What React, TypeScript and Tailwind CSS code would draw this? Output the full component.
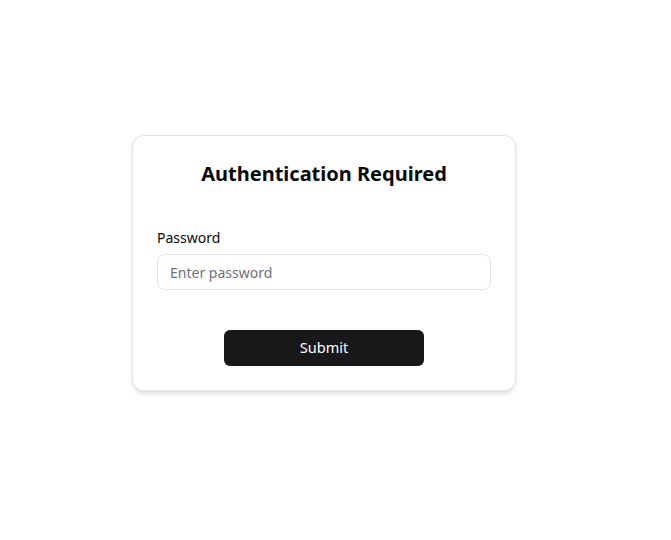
export default function App() {
    return (
        <div
            className="min-h-screen bg-white pl-[132px] pt-[135px] text-black"
            style={{ fontFamily: '"Noto Sans", "Open Sans", sans-serif' }}
        >
            <div className="w-96 rounded-xl border border-[#e4e4e7] bg-white p-6 shadow-md">
                <h1 className="text-center text-xl font-bold leading-7 text-[#09090b]">
                    Authentication Required
                </h1>

                <form className="mt-10" onSubmit={(e) => e.preventDefault()}>
                    <label htmlFor="password" className="block text-sm leading-5 text-[#09090b]">
                        Password
                    </label>
                    <input
                        id="password"
                        type="password"
                        placeholder="Enter password"
                        className="mt-1.5 block h-9 w-full rounded-lg border border-[#e4e4e7] px-3 text-[14px] placeholder-[#71717a] focus:outline-none"
                    />

                    <div className="mt-10 flex justify-center">
                        <button
                            type="submit"
                            className="h-9 w-[200px] rounded-md bg-[#18181b] text-[14.5px] text-white"
                        >
                            Submit
                        </button>
                    </div>
                </form>
            </div>
        </div>
    );
}
